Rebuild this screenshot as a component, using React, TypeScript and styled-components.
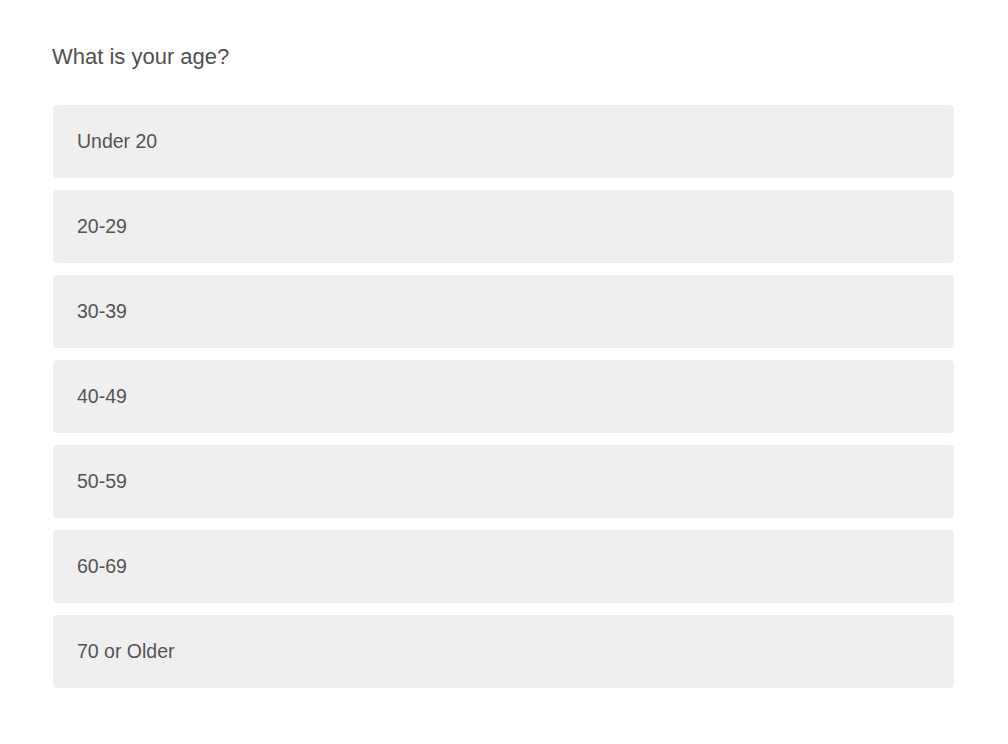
import React from "react";
import styled, { createGlobalStyle } from "styled-components";

const GlobalStyle = createGlobalStyle`
  body {
    margin: 0;
    background: #ffffff;
    font-family: "Liberation Sans", Arial, sans-serif;
  }
`;

const Page = styled.div`
  padding: 44px 54px 0 52px;
`;

const Question = styled.div`
  font-size: 22px;
  line-height: 26px;
  color: #505050;
  margin-bottom: 35px;
`;

const Options = styled.div`
  display: flex;
  flex-direction: column;
  gap: 12px;
  margin-left: 1px;
`;

const Option = styled.div`
  height: 73px;
  box-sizing: border-box;
  display: flex;
  align-items: center;
  padding: 0 24px;
  background: #efefef;
  border-radius: 4px;
  font-size: 19.5px;
  color: #555555;
`;

const ages = ["Under 20", "20-29", "30-39", "40-49", "50-59", "60-69", "70 or Older"];

export default function App() {
  return (
    <>
      <GlobalStyle />
      <Page>
        <Question>What is your age?</Question>
        <Options>
          {ages.map((a) => (
            <Option key={a}>{a}</Option>
          ))}
        </Options>
      </Page>
    </>
  );
}
